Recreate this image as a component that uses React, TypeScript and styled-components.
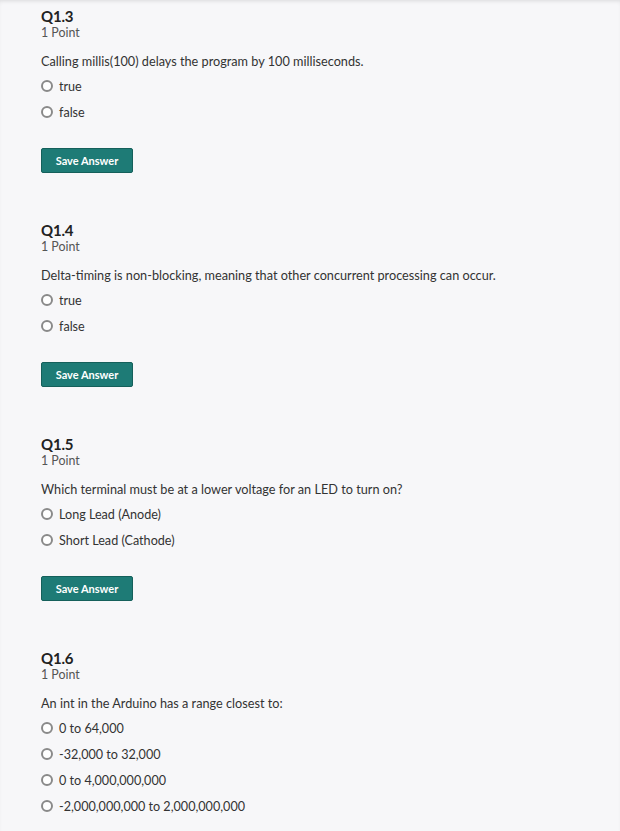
import React from "react";
import styled, { createGlobalStyle } from "styled-components";

const Global = createGlobalStyle`
  html, body { margin: 0; padding: 0; background: #f7f7f9; }
  body { font-family: "Lato", "Open Sans", sans-serif; color: #333; }
`;

const Page = styled.div`
  min-height: 831px;
  background: #f7f7f9;
  box-shadow: inset 0 3px 4px -2px rgba(0, 0, 0, 0.12);
  padding: 7px 0 0 41px;
  box-sizing: border-box;
`;

const Question = styled.section`
  display: flex;
  flex-direction: column;
  align-items: flex-start;
  margin-bottom: 48px;
`;

const Title = styled.h2`
  margin: 0;
  font-size: 15px;
  line-height: 18px;
  font-weight: 700;
  color: #222;
  letter-spacing: -0.2px;
`;

const Points = styled.div`
  font-size: 12.4px;
  line-height: 16px;
  color: #555;
`;

const Prompt = styled.p`
  margin: 12px 0 4px;
  font-size: 12.7px;
  line-height: 16px;
  color: #333;
`;

const Option = styled.label`
  display: flex;
  align-items: center;
  gap: 6px;
  height: 26px;
  font-size: 12.6px;
  color: #333;
`;

const Radio = styled.span`
  width: 12px;
  height: 12px;
  box-sizing: border-box;
  border: 2px solid #8a8a8a;
  border-radius: 50%;
  background: #fff;
  flex: none;
`;

const SaveButton = styled.button`
  margin-top: 23px;
  width: 92px;
  height: 25px;
  box-sizing: border-box;
  background: #1e7b76;
  border: 1px solid #15605b;
  border-radius: 2px;
  color: #fff;
  font-family: "Lato", "Open Sans", sans-serif;
  font-size: 11px;
  font-weight: 700;
  padding: 0;
`;

const questions = [
  { id: "Q1.3", prompt: "Calling millis(100) delays the program by 100 milliseconds.", options: ["true", "false"], save: true },
  { id: "Q1.4", prompt: "Delta-timing is non-blocking, meaning that other concurrent processing can occur.", options: ["true", "false"], save: true },
  { id: "Q1.5", prompt: "Which terminal must be at a lower voltage for an LED to turn on?", options: ["Long Lead (Anode)", "Short Lead (Cathode)"], save: true },
  {
    id: "Q1.6",
    prompt: "An int in the Arduino has a range closest to:",
    options: ["0 to 64,000", "-32,000 to 32,000", "0 to 4,000,000,000", "-2,000,000,000 to 2,000,000,000"],
    save: false,
  },
];

export default function App() {
  return (
    <Page>
      <Global />
      {questions.map((q) => (
        <Question key={q.id}>
          <Title>{q.id}</Title>
          <Points>1 Point</Points>
          <Prompt>{q.prompt}</Prompt>
          {q.options.map((o) => (
            <Option key={o}>
              <Radio />
              {o}
            </Option>
          ))}
          {q.save && <SaveButton>Save Answer</SaveButton>}
        </Question>
      ))}
    </Page>
  );
}
